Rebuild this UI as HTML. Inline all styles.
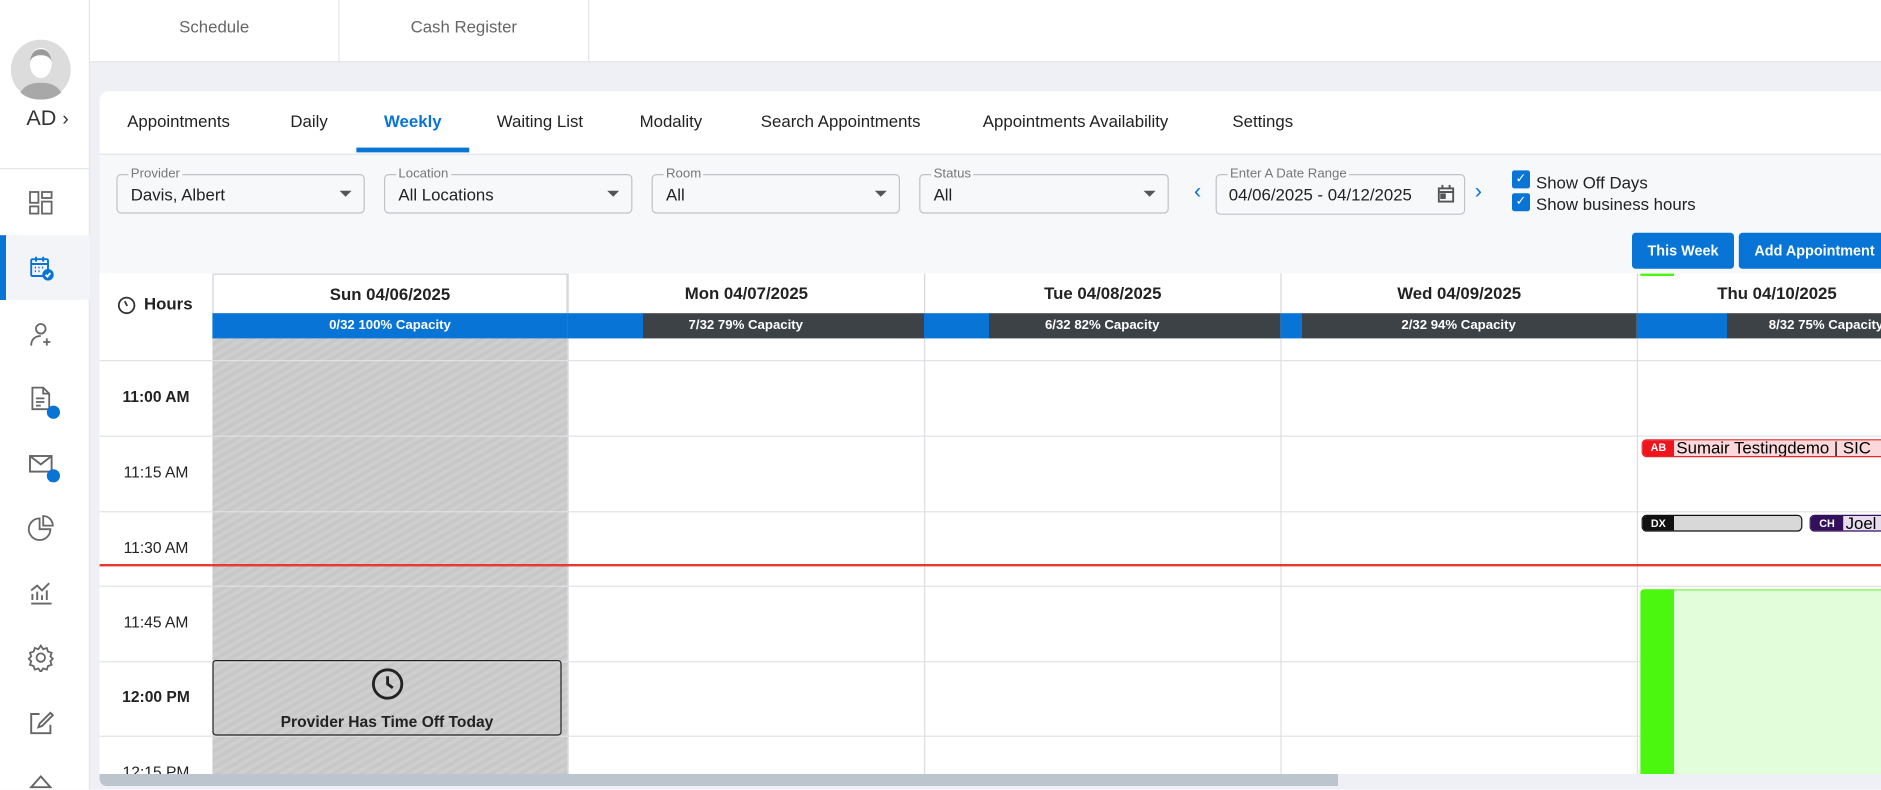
<!DOCTYPE html>
<html><head><meta charset="utf-8"><style>
*{box-sizing:border-box;margin:0;padding:0}
html,body{width:1881px;height:789px;overflow:hidden;background:#fff}
#w{position:absolute;left:0;top:0;width:1568px;height:658px;transform:scale(1.2);transform-origin:0 0;font-family:"Liberation Sans",sans-serif;background:#eef0f6;overflow:hidden}
.a{position:absolute}
.side{left:0;top:0;width:75px;height:658px;background:#fff;border-right:1px solid #e3e5ea}
.ic{position:absolute;left:22px;width:24px;height:24px}
.top{left:75px;top:0;width:1493px;height:52px;background:#fff;border-bottom:1px solid #e1e3e8}
.tt{position:absolute;top:0;height:52px;line-height:44px;text-align:center;color:#666;font-size:14px;border-right:1px solid #e4e4e4}
.panel{left:83px;top:76px;width:1490px;height:590px;background:#fff;border-radius:8px 0 0 0}
.tab{position:absolute;top:17px;font-size:14px;color:#222}
.filt{left:83px;top:128px;width:1485px;height:100px;background:#f7f8fa;border-top:1px solid #e2e4e8}
.fld{position:absolute;top:16px;height:33px;border:1px solid #bfc2c7;border-radius:4px;background:#f7f8fa}
.fld .l{position:absolute;left:9px;top:-6px;font-size:11px;color:#777;background:#f7f8fa;padding:0 2px;line-height:11px}
.fld .v{position:absolute;left:11px;top:8px;font-size:14px;color:#222}
.fld .c{position:absolute;right:10px;top:13px;width:0;height:0;border-left:5px solid transparent;border-right:5px solid transparent;border-top:5px solid #555}
.btn{position:absolute;top:194px;height:30px;background:#0874d6;color:#fff;font-size:12px;font-weight:bold;text-align:center;line-height:30px;border-radius:3px;white-space:nowrap}
.hd{position:absolute;top:228px;height:34px;background:#fff;border-left:1px solid #d6d8dc;text-align:center;font-size:14px;font-weight:bold;color:#222;line-height:32px}
.cap{position:absolute;top:261px;height:21px;background:#3d4247;color:#fff;font-size:11px;font-weight:bold;text-align:center;line-height:21px}
.hl{position:absolute;left:83px;width:1485px;height:1px;background:#e0e2e5}
.vl{position:absolute;top:228px;width:1px;height:420px;background:#dcdee1}
.tm{position:absolute;left:83px;width:94px;text-align:center;font-size:13px;color:#222}
</style></head><body><div id="w">
<div class="a side">
 <svg class="a" style="left:9px;top:33px" width="50" height="50" viewBox="0 0 50 50"><circle cx="25" cy="25" r="25" fill="#dcdcdc"/><path d="M16 20c0-9 4-13 9-13s9 4 9 13c0 7-4 12-9 12s-9-5-9-12z" fill="#fff"/><path d="M8 44c4-6 9-8 17-8s13 2 17 8c-4 4-10 6-17 6S12 48 8 44z" fill="#a8a8a8"/><path d="M16 18c1-8 5-10 9-10s8 2 9 10c-2-4-5-5-9-5s-7 1-9 5z" fill="#9a9a9a"/></svg>
 <div class="a" style="left:22px;top:88px;font-size:18px;color:#333">AD <span style="font-size:16px">&#x203A;</span></div>
 <div class="a" style="left:0;top:140px;width:75px;height:1px;background:#e3e5ea"></div>
 <div class="a" style="left:0;top:196px;width:75px;height:54px;background:#f3f4f8"></div>
 <div class="a" style="left:0;top:196px;width:5px;height:54px;background:#0874d6"></div>
 <svg class="ic" style="top:157px" viewBox="0 0 24 24" fill="none" stroke="#666" stroke-width="1.5"><rect x="3" y="3" width="7" height="9"/><rect x="13" y="3" width="8" height="5"/><rect x="3" y="15" width="7" height="6"/><rect x="13" y="11" width="8" height="10"/></svg>
 <svg class="ic" style="top:211px" viewBox="0 0 24 24" fill="none" stroke="#0874d6" stroke-width="1.6"><rect x="4" y="5" width="14" height="14" rx="1"/><path d="M8 3v4M14 3v4M4 9h14M7 12h1M10 12h1M13 12h1M7 15h1M10 15h1"/><circle cx="18" cy="18" r="4" fill="#0874d6"/><path d="M16 18l1.5 1.5 2.5-3" stroke="#fff"/></svg>
 <svg class="ic" style="top:266px" viewBox="0 0 24 24" fill="none" stroke="#666" stroke-width="1.5"><circle cx="12" cy="8" r="4"/><path d="M4 22c0-5 3-8 8-8M14 19h6M17 16v6"/></svg>
 <svg class="ic" style="top:320px" viewBox="0 0 24 24" fill="none" stroke="#666" stroke-width="1.5"><path d="M5 3h9l5 5v13H5z M14 3v5h5 M8 12h7M8 15h7M8 18h4"/></svg>
 <div class="a" style="left:39px;top:338px;width:11px;height:11px;border-radius:50%;background:#0874d6"></div>
 <svg class="ic" style="top:375px" viewBox="0 0 24 24" fill="none" stroke="#666" stroke-width="1.6"><rect x="3" y="5" width="18" height="13"/><path d="M3 5l9 7 9-7"/></svg>
 <div class="a" style="left:39px;top:391px;width:11px;height:11px;border-radius:50%;background:#0874d6"></div>
 <svg class="ic" style="top:428px" viewBox="0 0 24 24" fill="none" stroke="#666" stroke-width="1.5"><path d="M11 4a9 9 0 1 0 9 9h-9z M14 2v8h8a8 8 0 0 0-8-8z"/></svg>
 <svg class="ic" style="top:482px" viewBox="0 0 24 24" fill="none" stroke="#666" stroke-width="1.6"><path d="M4 21h17M5 18v-5M9 18v-7M13 18v-4M17 18v-8M4 10l5-4 4 4 6-6"/></svg>
 <svg class="ic" style="top:536px" viewBox="0 0 24 24" fill="none" stroke="#666" stroke-width="1.5"><circle cx="12" cy="12" r="3.5"/><path d="M12 2l2 3 3-1 1 3 3 1-1 3 2 2-2 2 1 3-3 1-1 3-3-1-2 3-2-3-3 1-1-3-3-1 1-3-2-2 2-2-1-3 3-1 1-3 3 1z"/></svg>
 <svg class="ic" style="top:591px" viewBox="0 0 24 24" fill="none" stroke="#666" stroke-width="1.6"><path d="M11 4H4v16h16v-7 M20 3l-9 9-1 3 3-1 9-9z"/></svg>
 <svg class="ic" style="top:644px" viewBox="0 0 24 24" fill="none" stroke="#666" stroke-width="1.6"><path d="M12 3l8 9H4z"/></svg>
</div>
<div class="a top">
 <div class="tt" style="left:0;width:208px">Schedule</div>
 <div class="tt" style="left:208px;width:208px">Cash Register</div>
</div>
<div class="a panel">
 <div class="tab" style="left:23px">Appointments</div>
 <div class="tab" style="left:159px">Daily</div>
 <div class="tab" style="left:237px;color:#0874d6;font-weight:bold">Weekly</div>
 <div class="a" style="left:214px;top:47px;width:94px;height:4px;background:#0874d6"></div>
 <div class="tab" style="left:331px">Waiting List</div>
 <div class="tab" style="left:450px">Modality</div>
 <div class="tab" style="left:551px">Search Appointments</div>
 <div class="tab" style="left:736px">Appointments Availability</div>
 <div class="tab" style="left:944px">Settings</div>
</div>
<div class="a filt">
 <div class="fld" style="left:14px;width:207px"><span class="l">Provider</span><span class="v">Davis, Albert</span><span class="c"></span></div>
 <div class="fld" style="left:237px;width:207px"><span class="l">Location</span><span class="v">All Locations</span><span class="c"></span></div>
 <div class="fld" style="left:460px;width:207px"><span class="l">Room</span><span class="v">All</span><span class="c"></span></div>
 <div class="fld" style="left:683px;width:208px"><span class="l">Status</span><span class="v">All</span><span class="c"></span></div>
 <div class="a" style="left:912px;top:20px;color:#0874d6;font-size:18px">&#x2039;</div>
 <div class="fld" style="left:930px;width:208px;height:34px"><span class="l">Enter A Date Range</span><span class="v" style="left:10px">04/06/2025 - 04/12/2025</span>
  <svg class="a" style="left:184px;top:8px" width="14" height="15" viewBox="0 0 14 15" fill="none" stroke="#555" stroke-width="1.6"><rect x="1" y="3" width="12" height="11"/><path d="M4 0v3M10 0v3M1 6h12"/><rect x="3" y="8" width="3" height="3" fill="#555"/></svg></div>
 <div class="a" style="left:1146px;top:20px;color:#0874d6;font-size:18px">&#x203A;</div>
 <div class="a" style="left:1177px;top:13px;width:15px;height:15px;background:#0874d6;border-radius:2px;color:#fff;font-size:11px;text-align:center;line-height:15px">&#x2713;</div>
 <div class="a" style="left:1197px;top:15px;font-size:14px;color:#222">Show Off Days</div>
 <div class="a" style="left:1177px;top:32px;width:15px;height:15px;background:#0874d6;border-radius:2px;color:#fff;font-size:11px;text-align:center;line-height:15px">&#x2713;</div>
 <div class="a" style="left:1197px;top:33px;font-size:14px;color:#222">Show business hours</div>
</div>
<div class="btn" style="left:1360px;width:85px">This Week</div>
<div class="btn" style="left:1449px;width:130px;text-align:left;padding-left:13px">Add Appointment</div>

<div class="a" style="left:83px;top:228px;width:1485px;height:420px;background:#fff"></div>
<div class="a" style="left:177px;top:282px;width:296px;height:366px;background:repeating-linear-gradient(-30deg,#cfcfcf 0 3px,#c8c8c8 3px 6px)"></div>
<div class="hl" style="top:300px"></div><div class="hl" style="top:363px"></div><div class="hl" style="top:426px"></div><div class="hl" style="top:488px"></div><div class="hl" style="top:551px"></div><div class="hl" style="top:613px"></div>
<div class="vl" style="left:473px"></div><div class="vl" style="left:770px"></div><div class="vl" style="left:1067px"></div><div class="vl" style="left:1364px"></div>
<div class="a" style="left:83px;top:228px;width:94px;height:54px;background:#fff"></div>
<svg class="a" style="left:98px;top:247px" width="15" height="15" viewBox="0 0 15 15" fill="none" stroke="#333" stroke-width="1.5"><circle cx="7.5" cy="7.5" r="6.5"/><path d="M6 4l2 4"/></svg>
<div class="a" style="left:120px;top:245px;font-size:14px;font-weight:bold;color:#222">Hours</div>
<div class="hd" style="left:177px;width:296px;border:1px solid #d0d2d6">Sun 04/06/2025</div>
<div class="hd" style="left:473px;width:297px">Mon 04/07/2025</div>
<div class="hd" style="left:770px;width:297px">Tue 04/08/2025</div>
<div class="hd" style="left:1067px;width:297px">Wed 04/09/2025</div>
<div class="hd" style="left:1364px;width:210px;padding-left:66px;text-align:left;white-space:nowrap">Thu 04/10/2025</div>
<div class="a" style="left:1367px;top:228px;width:28px;height:2px;background:#4cf70f"></div>
<div class="cap" style="left:177px;width:296px;background:#0874d6">0/32 100% Capacity</div>
<div class="cap" style="left:473px;width:297px;background:linear-gradient(90deg,#0874d6 63px,#3d4247 63px)">7/32 79% Capacity</div>
<div class="cap" style="left:770px;width:297px;background:linear-gradient(90deg,#0874d6 54px,#3d4247 54px)">6/32 82% Capacity</div>
<div class="cap" style="left:1067px;width:297px;background:linear-gradient(90deg,#0874d6 18px,#3d4247 18px)">2/32 94% Capacity</div>
<div class="cap" style="left:1364px;width:204px;background:linear-gradient(90deg,#0874d6 75px,#3d4247 75px);text-align:left;padding-left:110px;white-space:nowrap">8/32 75% Capacity</div>
<div class="tm" style="top:323px;font-weight:bold">11:00 AM</div>
<div class="tm" style="top:386px">11:15 AM</div>
<div class="tm" style="top:449px">11:30 AM</div>
<div class="tm" style="top:511px">11:45 AM</div>
<div class="tm" style="top:573px;font-weight:bold">12:00 PM</div>
<div class="tm" style="top:636px">12:15 PM</div>
<div class="a" style="left:83px;top:470px;width:1485px;height:1.5px;background:#e8392f"></div>
<div class="a" style="left:177px;top:550px;width:291px;height:63px;border:1px solid #222;border-radius:3px;text-align:center">
 <svg style="margin-top:5px" width="28" height="28" viewBox="0 0 26 26" fill="none" stroke="#222" stroke-width="2.2"><circle cx="13" cy="13" r="11"/><path d="M13 7v6l4 3"/></svg>
 <div style="font-size:13px;font-weight:bold;color:#222;margin-top:5px">Provider Has Time Off Today</div></div>
<div class="a" style="left:1368px;top:366px;width:210px;height:15px;background:#fbd9db;border:1px solid #e8262e;border-radius:4px 0 0 4px;overflow:hidden;white-space:nowrap;font-size:14px;line-height:13px"><span style="display:inline-block;vertical-align:top;background:#f0141c;color:#fff;font-size:9px;font-weight:bold;width:26px;text-align:center;height:14px;line-height:13px;margin-right:2px">AB</span>Sumair Testingdemo | SIC</div>
<div class="a" style="left:1368px;top:429px;width:134px;height:14px;background:#d8d8d8;border:1.5px solid #111;border-radius:4px;overflow:hidden"><span style="display:inline-block;vertical-align:top;background:#111;color:#fff;font-size:9px;font-weight:bold;width:26px;text-align:center;height:14px;line-height:12px">DX</span></div>
<div class="a" style="left:1508px;top:429px;width:70px;height:14px;background:#e6def0;border:1px solid #33105c;border-radius:4px 0 0 4px;overflow:hidden;white-space:nowrap;font-size:14px;line-height:12px"><span style="display:inline-block;vertical-align:top;background:#33105c;color:#fff;font-size:9px;font-weight:bold;width:27px;text-align:center;height:14px;line-height:13px;margin-right:2px">CH</span>Joel</div>
<div class="a" style="left:1367px;top:491px;width:210px;height:160px;background:#e1fdd9;border-top:1px solid #4cf70f;border-radius:3px 0 0 0"></div>
<div class="a" style="left:1367px;top:491px;width:28px;height:160px;background:#4cf70f;border-radius:3px 0 0 0"></div>
<div class="a" style="left:83px;top:645px;width:1485px;height:13px;background:#eef0f6"></div>
<div class="a" style="left:83px;top:645px;width:1032px;height:10px;background:#bcc5cd;border-radius:0 0 0 6px"></div>
</div></body></html>
